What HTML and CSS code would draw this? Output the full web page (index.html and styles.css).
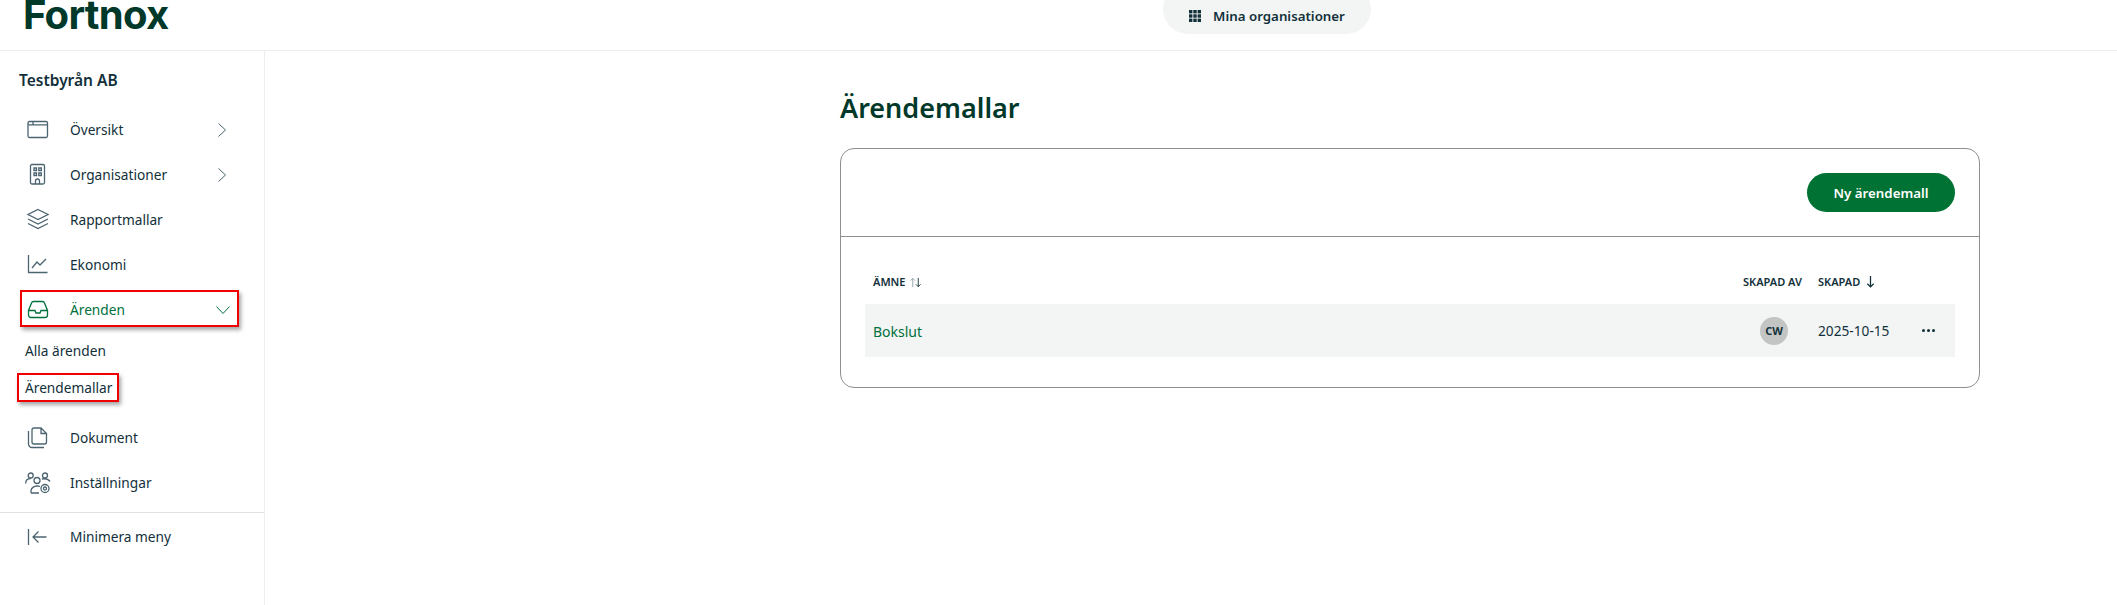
FILE: index.html
```html
<!DOCTYPE html>
<html lang="sv">
<head>
    <meta charset="UTF-8">
    <meta name="viewport" content="width=device-width, initial-scale=1.0">
    <title>Ärendemallar</title>
    <link rel="stylesheet" href="styles.css">
</head>
<body>
    <header class="topbar">
        <div class="logo">Fortnox</div>
        <button class="org-btn">
            <svg class="grid-icon" viewBox="0 0 12 12" width="12" height="12">
                <rect x="0" y="0" width="3.4" height="3.4"/><rect x="4.3" y="0" width="3.4" height="3.4"/><rect x="8.6" y="0" width="3.4" height="3.4"/>
                <rect x="0" y="4.3" width="3.4" height="3.4"/><rect x="4.3" y="4.3" width="3.4" height="3.4"/><rect x="8.6" y="4.3" width="3.4" height="3.4"/>
                <rect x="0" y="8.6" width="3.4" height="3.4"/><rect x="4.3" y="8.6" width="3.4" height="3.4"/><rect x="8.6" y="8.6" width="3.4" height="3.4"/>
            </svg>
            Mina organisationer
        </button>
    </header>
    <div class="layout">
        <nav class="sidebar">
            <div class="company">Testbyrån AB</div>
            <ul class="menu">
                <li class="item">
                    <svg class="icon" viewBox="0 0 24 24"><rect x="2" y="3.5" width="19.5" height="16" rx="1.5"/><path d="M2 6.8h19.5M7 3.5v3.3"/></svg>
                    <span class="label">Översikt</span>
                    <svg class="chevron" viewBox="0 0 12 16"><path d="M2.5 1.5 9.5 8l-7 6.5"/></svg>
                </li>
                <li class="item">
                    <svg class="icon" viewBox="0 0 24 24"><rect x="4.5" y="1.5" width="14" height="19.5" rx="1.5"/><path d="M8 5h2.500v2.500H8zM12.800 5h2.500v2.500h-2.500zM8 10h2.500v2.500H8zM12.800 10h2.500v2.500h-2.500zM9.500 21v-3a2 2 0 0 1 4 0v3"/></svg>
                    <span class="label">Organisationer</span>
                    <svg class="chevron" viewBox="0 0 12 16"><path d="M2.5 1.5 9.5 8l-7 6.5"/></svg>
                </li>
                <li class="item">
                    <svg class="icon" viewBox="0 0 24 24"><path d="M12 1.5 22 6.5l-10 5-10-5zM2 11l10 5 10-5M2 15.5l10 5 10-5"/></svg>
                    <span class="label">Rapportmallar</span>
                </li>
                <li class="item">
                    <svg class="icon" viewBox="0 0 24 24"><path d="M2.5 2v17.500h19M6 15l5-6 3 3 6-6"/></svg>
                    <span class="label">Ekonomi</span>
                </li>
                <li class="item item-active">
                    <svg class="icon" viewBox="0 0 24 24"><path d="M7.500 3.500h9c1 0 1.700.5 2 1.500l3 7.500v4.500c0 1.500-1 2.500-2.500 2.500H5c-1.500 0-2.500-1-2.500-2.500v-4.500l3-7.500c.3-1 1-1.500 2-1.500zM2.500 12.500H9l1 2.500h4l1-2.500h6.500"/></svg>
                    <span class="label">Ärenden</span>
                    <svg class="chevron-down" viewBox="0 0 16 10"><path d="M1.5 1.5 8 8.500l6.500-7"/></svg>
                    <span class="mark"></span>
                </li>
                <li class="subitem subitem-first">Alla ärenden</li>
                <li class="subitem subitem-marked">Ärendemallar<span class="mark"></span></li>
                <li class="item item-after">
                    <svg class="icon" viewBox="0 0 24 24"><path d="M6 4c0-1.200.8-2 2-2h7l5.500 5.500V16c0 1.200-.8 2-2 2H8c-1.200 0-2-.8-2-2zM15 2v5.500h5.500M2.500 5v13a3.500 3.500 0 0 0 3.500 3.500h12"/></svg>
                    <span class="label">Dokument</span>
                </li>
                <li class="item">
                    <svg class="icon icon-wide" viewBox="0 0 26 24"><circle cx="5.7" cy="4.5" r="2.5"/><circle cx="12" cy="9.5" r="3"/><circle cx="20" cy="4.5" r="2.5"/><path d="M.7 12.500c0-3 2-4.800 5-4.800M17 8c2.500-.5 6-.2 8 2.500M6 22v-2c0-3 3-5 6-5 1 0 2 .2 3 .5M6 22h8"/><circle cx="20" cy="17.5" r="4"/><circle cx="20" cy="17.5" r="1.5"/></svg>
                    <span class="label">Inställningar</span>
                </li>
            </ul>
            <div class="minimize">
                <svg class="icon" viewBox="0 0 24 24"><path d="M2.500 4v16M20.500 12H7M12.500 6.500 7 12l5.500 5.500"/></svg>
                <span class="label">Minimera meny</span>
            </div>
        </nav>
        <main class="content">
            <h1>Ärendemallar</h1>
            <section class="card">
                <div class="card-top">
                    <button class="primary">Ny ärendemall</button>
                </div>
                <div class="card-body">
                    <div class="table-head">
                        <span class="col-subject">ÄMNE
                            <svg class="sort-icon" viewBox="0 0 14 12" width="13" height="11"><path class="faded" d="M4 11V1.500M1.500 4 4 1.500 6.500 4"/><path d="M10 1v9.500M7.500 8 10 10.500 12.500 8"/></svg>
                        </span>
                        <span class="col-by">SKAPAD AV</span>
                        <span class="col-date">SKAPAD
                            <svg class="sort-icon sort-active" viewBox="0 0 10 14" width="9" height="13"><path d="M5 1v12M1.500 9.500 5 13l3.500-3.500"/></svg>
                        </span>
                    </div>
                    <div class="table-row">
                        <span class="col-subject subject-link">Bokslut</span>
                        <span class="col-by"><span class="avatar">CW</span></span>
                        <span class="col-date">2025-10-15</span>
                        <span class="dots"><i></i><i></i><i></i></span>
                    </div>
                </div>
            </section>
        </main>
    </div>
</body>
</html>
```

FILE: styles.css
```css
* {
    box-sizing: border-box;
}
body {
    margin: 0;
    height: 605px;
    overflow: hidden;
    background-color: white;
    font-family: 'Noto Sans', sans-serif;
    font-size: 13.7px;
    color: #12303a;
}
.topbar {
    height: 51px;
    border-bottom: 1px solid #eeeeee;
    display: flex;
    justify-content: center;
    padding-left: 417px;
    position: relative;
}
.logo {
    position: absolute;
    left: 23px;
    top: -5px;
    font-family: 'Inter', sans-serif;
    font-weight: 700;
    font-size: 40px;
    letter-spacing: -0.7px;
    line-height: 40px;
    color: #00382a;
}
.org-btn {
    align-self: flex-end;
    margin-bottom: 16px;
    height: 50px;
    width: 208px;
    border: 0;
    border-radius: 25px;
    background-color: #f3f5f4;
    display: flex;
    align-items: flex-end;
    justify-content: center;
    gap: 12px;
    padding-bottom: 9px;
    font-family: inherit;
    font-size: 13.3px;
    font-weight: 600;
    color: #12303a;
}
.grid-icon {
    fill: #12303a;
    margin-bottom: 3px;
}
.layout {
    display: flex;
    height: 554px;
}
.sidebar {
    width: 265px;
    border-right: 1px solid #eeeeee;
    flex-shrink: 0;
}
.company {
    padding: 18px 0 0 19px;
    font-size: 15.5px;
    font-weight: 600;
    line-height: 22px;
}
.menu {
    list-style: none;
    margin: 16px 0 0;
    padding: 0;
}
.item {
    position: relative;
    height: 45px;
    display: flex;
    align-items: center;
    padding-left: 26px;
}
.item-active {
    color: #00703c;
}
.item-after {
    margin-top: 8px;
}
.icon {
    width: 24px;
    height: 24px;
    fill: none;
    stroke: #4c6470;
    stroke-width: 1.3;
    flex-shrink: 0;
}
.icon-wide {
    width: 26px;
    margin-left: -1px;
    margin-right: -1px;
}
.item-active .icon {
    stroke: #00703c;
}
.label {
    margin-left: 20px;
}
.chevron {
    position: absolute;
    left: 216px;
    top: 15px;
    width: 12px;
    height: 16px;
    fill: none;
    stroke: #4c6470;
}
.chevron-down {
    position: absolute;
    left: 215px;
    top: 18px;
    width: 16px;
    height: 10px;
    fill: none;
    stroke: #00703c;
}
.subitem {
    position: relative;
    height: 38px;
    line-height: 38px;
    padding-left: 25px;
}
.subitem-first {
    height: 37px;
}
.mark {
    position: absolute;
    border: 2px solid #f00000;
    box-shadow: 2px 3px 4px rgba(0, 0, 0, 0.35);
    pointer-events: none;
}
.item-active .mark {
    left: 20px;
    top: 3px;
    width: 219px;
    height: 37px;
}
.subitem-marked .mark {
    left: 17px;
    top: 4px;
    width: 102px;
    height: 29px;
}
.minimize {
    margin-top: 7px;
    border-top: 1px solid #e2e2e2;
    height: 48px;
    display: flex;
    align-items: center;
    padding-left: 26px;
}
.content {
    padding-left: 575px;
    width: 1715px;
}
h1 {
    margin: 38px 0 0;
    font-size: 27px;
    font-weight: 600;
    line-height: 38px;
    color: #00382a;
}
.card {
    margin-top: 21px;
    width: 1140px;
    height: 240px;
    border: 1px solid #8c918e;
    border-radius: 14px;
}
.card-top {
    height: 88px;
    border-bottom: 1px solid #8c918e;
    display: flex;
    justify-content: flex-end;
    align-items: center;
    padding-right: 24px;
}
.primary {
    width: 148px;
    height: 39px;
    border: 0;
    border-radius: 20px;
    background-color: #007233;
    color: white;
    font-family: inherit;
    font-size: 13.3px;
    font-weight: 600;
}
.card-body {
    padding: 0 24px;
}
.table-head {
    height: 67px;
    display: flex;
    align-items: center;
    padding-top: 22px;
    font-size: 11px;
    font-weight: 600;
}
.table-row {
    height: 53px;
    display: flex;
    align-items: center;
    background-color: #f3f5f4;
}
.col-subject {
    flex: 1;
    padding-left: 8px;
}
.col-by {
    width: 60px;
    text-align: right;
    white-space: nowrap;
}
.col-date {
    margin-left: 16px;
    width: 70px;
    white-space: nowrap;
}
.table-head .col-date {
    width: 137px;
}
.subject-link {
    padding-top: 2px;
    font-size: 14px;
    color: #00703c;
}
.sort-icon {
    fill: none;
    stroke: #12303a;
    vertical-align: -2px;
    margin-left: 1px;
}
.sort-active {
    stroke-width: 1.4;
    margin-left: 3px;
}
.sort-icon .faded {
    stroke: #8fa3a8;
}
.avatar {
    display: inline-block;
    width: 28px;
    height: 28px;
    margin-right: 14px;
    border-radius: 50%;
    background-color: #c2c5c3;
    font-size: 11px;
    font-weight: 700;
    line-height: 28px;
    text-align: center;
    color: #12303a;
}
.dots {
    margin-left: 34px;
    width: 33px;
    display: flex;
    gap: 2px;
}
.dots i {
    width: 3px;
    height: 3px;
    border-radius: 50%;
    background-color: #12303a;
}
```
